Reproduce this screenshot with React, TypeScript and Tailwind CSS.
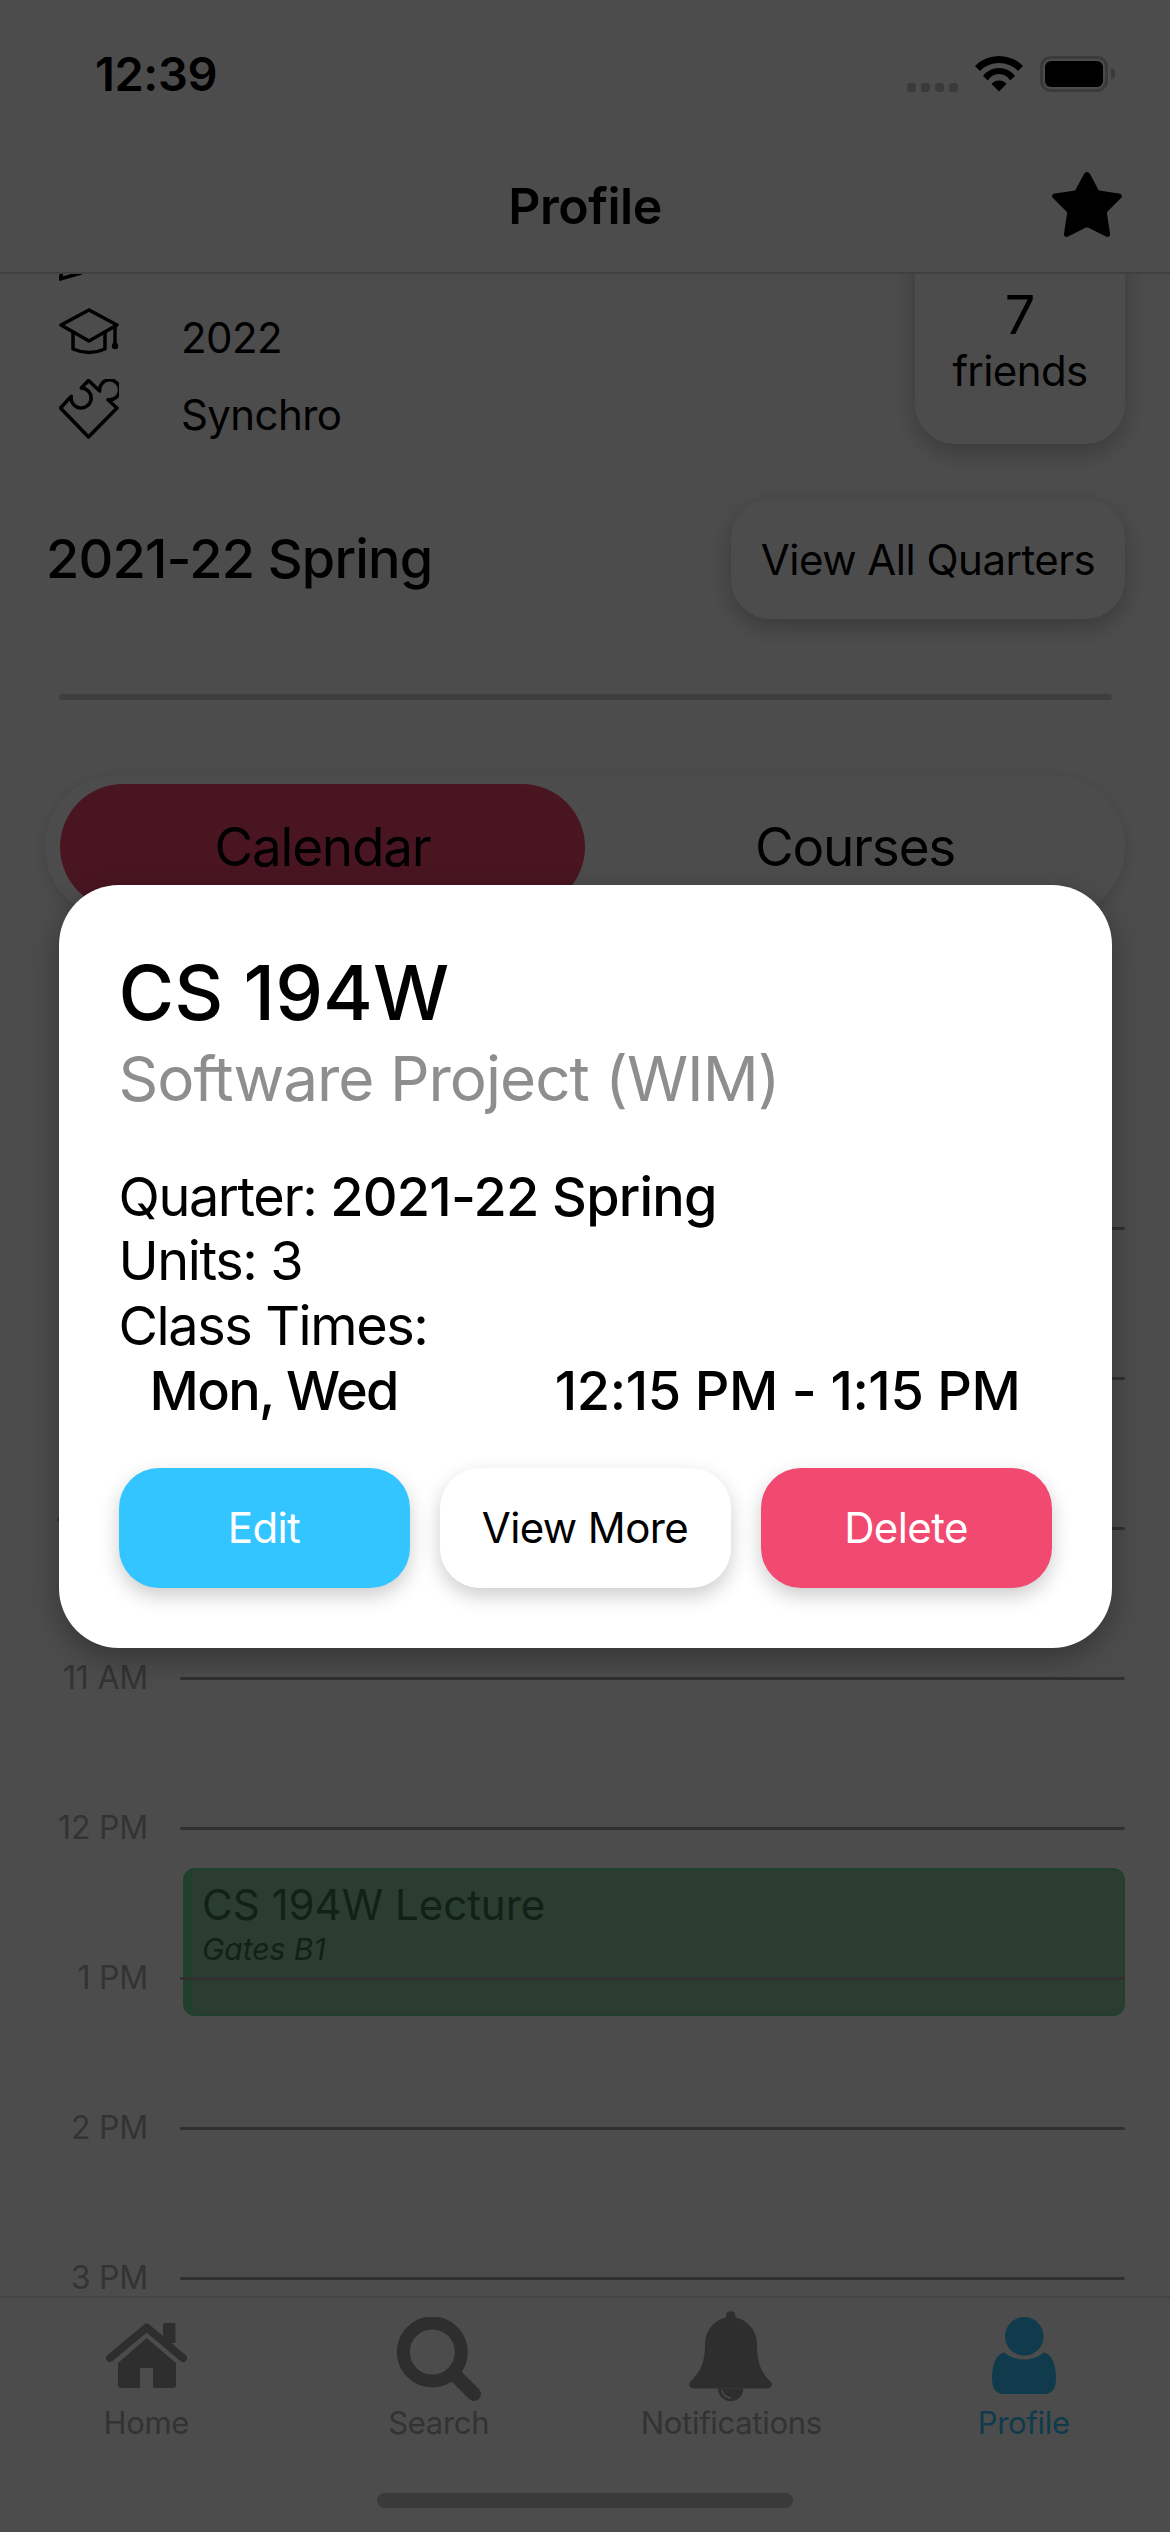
import React from "react";

const Hour = ({ label, children }: { label: string; children?: React.ReactNode }) => (
  <div className="relative flex h-[150px] items-center">
    <div className="w-[148px] text-right text-[32px] leading-none tracking-[-0.2px] text-[#aaaaaa]">{label}</div>
    <div className="ml-[32px] h-[3px] flex-1 rounded-full bg-[#a0a0a0]" />
    {children}
  </div>
);

const Tab = ({ icon, label, active }: { icon: React.ReactNode; label: string; active?: boolean }) => (
  <div className={`flex flex-col items-center ${active ? "text-[#33c5ff]" : "text-[#999999]"}`}>
    <div className="flex h-[90px] w-[120px] items-start justify-center">{icon}</div>
    <div className={`mt-[4px] text-[31px] leading-[36px] tracking-[-0.3px] ${active ? "" : "text-[#aaaaaa]"}`}>{label}</div>
  </div>
);

const ActionButton = ({ label, cls }: { label: string; cls: string }) => (
  <button className={`h-[120px] w-[291px] rounded-[40px] text-[42px] tracking-[-0.6px] shadow-[0_8px_20px_rgba(0,0,0,0.2)] ${cls}`}>
    {label}
  </button>
);

export default function App() {
  return (
    <div className="relative flex h-[2532px] w-[1170px] flex-col overflow-hidden bg-white font-['Inter','Liberation_Sans',sans-serif] text-black">
      <header className="z-10 h-[274px] shrink-0 border-b-2 border-[#d8d8d8] bg-white">
        <div className="flex h-[147px] items-center justify-between pl-[95px] pr-[55px]">
          <span className="text-[47px] font-semibold leading-none tracking-[-0.4px]">12:39</span>
          <div className="flex items-start">
            <div className="mr-[17px] mt-[27px] flex gap-[5px]">
              <i className="h-[9px] w-[9px] rounded-[3px] bg-[#c4c4c4]" />
              <i className="h-[9px] w-[9px] rounded-[3px] bg-[#c4c4c4]" />
              <i className="h-[9px] w-[9px] rounded-[3px] bg-[#c4c4c4]" />
              <i className="h-[9px] w-[9px] rounded-[3px] bg-[#c4c4c4]" />
            </div>
            <svg width="48" height="36" viewBox="0 0 48 36" className="mr-[17px]">
              <path d="M0 10 L5 15 A26.5 26.5 0 0 1 43 15 L48 10 A33.8 33.8 0 0 0 0 10Z" />
              <path d="M8 20 L13 24.5 A12.5 12.5 0 0 1 35 24.5 L40 20 A20 20 0 0 0 8 20Z" />
              <path d="M24 35.5 L16.5 28 A9.8 9.8 0 0 1 31.5 28 Z" />
            </svg>
            <div className="flex items-center">
              <div className="h-[36px] w-[68px] rounded-[11px] border-[3px] border-[#c4c4c4] p-[2px]">
                <div className="h-full w-full rounded-[6px] bg-black" />
              </div>
              <div className="ml-[3px] h-[11px] w-[4px] rounded-r-full bg-[#c4c4c4]" />
            </div>
          </div>
        </div>
        <div className="relative flex h-[126px] items-center justify-center">
          <span className="-mt-[8px] text-[50px] font-semibold leading-none tracking-[-0.5px]">Profile</span>
          <svg width="72" height="68" viewBox="0 0 72 68" className="absolute right-[47px] top-[23px]">
            <path d="M36 2 C37.5 2 38.5 3 39 4 L47 19 C47.5 20 48 20.5 49.5 20.7 L68 23.5 C71 24 71.7 26.5 70 28 L57 41 C56 42 55.8 43 56 44 L59 63.5 C59.5 66.5 57 67.5 55 66.5 L38 58 C36.8 57.4 35.2 57.4 34 58 L17 66.5 C15 67.5 12.5 66.5 13 63.5 L16 44 C16.2 43 16 42 15 41 L2 28 C0.3 26.5 1 24 4 23.5 L22.5 20.7 C24 20.5 24.5 20 25 19 L33 4 C33.5 3 34.5 2 36 2Z" />
          </svg>
        </div>
      </header>

      <main className="min-h-0 flex-1 overflow-hidden">
        <div className="-mt-[58px]">
          <div className="flex items-start justify-between pl-[59px] pr-[45px]">
            <div className="flex flex-col text-[42px] leading-none tracking-[-0.6px]">
              <div className="flex h-[77px] items-center">
                <svg width="60" height="60" viewBox="0 0 60 60" fill="none" stroke="currentColor" strokeWidth="3.5" strokeLinejoin="round" className="-mt-[6px]">
                  <path d="M1 57 L7 36 L40 3 Q44 -1 48 3 L56 11 Q60 15 56 19 L22 51 Z" />
                </svg>
              </div>
              <div className="flex h-[77px] items-center gap-[62px]">
                <svg width="60" height="48" viewBox="0 0 60 48" fill="none" stroke="currentColor" strokeWidth="3.5" strokeLinejoin="round" strokeLinecap="round">
                  <path d="M2 17 L30 2 L58 17 L30 33 Z" />
                  <path d="M14 24 V41 Q30 48 46 41 V24" />
                  <path d="M56 17 V37" />
                  <circle cx="56" cy="38" r="3.2" fill="currentColor" stroke="none" />
                </svg>
                <span className="pt-[12px]">2022</span>
              </div>
              <div className="flex h-[77px] items-center gap-[62px]">
                <svg width="60" height="60" viewBox="0 0 60 60" fill="none" stroke="currentColor" strokeWidth="3.5" strokeLinejoin="round" strokeLinecap="round">
                  <path d="M1.5 29 L12.3 17.3 A10 10 0 1 0 22.3 9 L29.5 1.5 L40.7 12 A10 10 0 1 1 49 20.7 L58 29 L29.5 58 Z" />
                </svg>
                <span className="pt-[12px]">Synchro</span>
              </div>
            </div>
            <div className="flex h-[228px] w-[210px] flex-col items-center justify-end rounded-[40px] bg-white pb-[47px] shadow-[0_8px_24px_rgba(0,0,0,0.25)]">
              <div className="text-[54px] leading-[60px]">7</div>
              <div className="text-[42px] leading-[52px] tracking-[-0.6px]">friends</div>
            </div>
          </div>

          <div className="mt-[52px] flex items-center justify-between pl-[46px] pr-[45px]">
            <h2 className="text-[54px] font-medium leading-none tracking-[-0.8px]">2021-22 Spring</h2>
            <button className="h-[120px] w-[394px] rounded-[40px] bg-white text-[42px] tracking-[-0.5px] shadow-[0_8px_24px_rgba(0,0,0,0.25)]">
              View All Quarters
            </button>
          </div>

          <div className="ml-[59px] mr-[58px] mt-[75px] h-[6px] rounded-full bg-[#d0d0d0]" />

          <div className="ml-[45px] mr-[45px] mt-[75px] flex h-[144px] items-center rounded-[72px] bg-white py-[9px] pl-[15px] shadow-[0_4px_16px_rgba(0,0,0,0.15)]">
            <div className="flex h-[126px] w-[525px] items-center justify-center rounded-[63px] bg-[#f24970] text-[53px] leading-none tracking-[-1.2px]">
              Calendar
            </div>
            <div className="flex h-[126px] flex-1 items-center justify-center text-[53px] leading-none tracking-[-1.2px]">
              Courses
            </div>
          </div>

          <div className="mt-[234px] pr-[45px]">
            <Hour label="8 AM" />
            <Hour label="9 AM" />
            <Hour label="10 AM" />
            <Hour label="11 AM" />
            <Hour label="12 PM">
              <div className="absolute left-[183px] right-0 top-[115px] h-[148px] rounded-[12px] border-y-2 border-l-[9px] border-r-2 border-[#6fd68f] bg-[#64b47b]/70 pl-[10px] pt-[11px] text-[#397150]">
                <div className="text-[42px] leading-[48px]">CS 194W Lecture</div>
                <div className="mt-[3px] text-[30px] italic leading-[34px]">Gates B1</div>
              </div>
            </Hour>
            <Hour label="1 PM" />
            <Hour label="2 PM" />
            <Hour label="3 PM" />
          </div>
        </div>
      </main>

      <footer className="z-10 h-[236px] shrink-0 border-t-2 border-[#e4e4e4] bg-white">
        <div className="grid h-[140px] grid-cols-4 pt-[13px]">
          <Tab
            label="Home"
            icon={
              <svg width="81" height="65" viewBox="0 0 81 65" fill="currentColor" className="mt-[12px]">
                <path d="M4 35 L40.7 4.5 L77 35" fill="none" stroke="currentColor" strokeWidth="8" strokeLinecap="round" strokeLinejoin="round" />
                <rect x="57" y="0" width="12.5" height="20" rx="1" />
                <path d="M12 40 L40.7 15 L70 40 V62 Q70 65 67 65 H47 V45 H34 V65 H15 Q12 65 12 62Z" />
              </svg>
            }
          />
          <Tab
            label="Search"
            icon={
              <svg width="84" height="84" viewBox="0 0 84 84" fill="none" stroke="currentColor" className="mt-[6px]">
                <circle cx="35.3" cy="35" r="29" strokeWidth="13" />
                <path d="M57 57 L77 77" strokeWidth="14" strokeLinecap="round" />
              </svg>
            }
          />
          <Tab
            label="Notifications"
            icon={
              <svg width="84" height="90" viewBox="0 0 84 90" fill="currentColor">
                <circle cx="41.7" cy="5" r="4.8" />
                <path d="M41.7 6 C56 6 68 18 68 33 C68 55 74 63 81 70 C85 74 82 77.5 78 77.5 H5 C1 77.5 -2 74 2 70 C9 63 16 55 16 33 C16 18 28 6 41.7 6Z" />
                <path d="M29 77.5 H54.4 A12.7 12.7 0 0 1 29 77.5Z" />
                <path d="M33 79 A9 9 0 0 0 42 87" fill="none" stroke="#ffffff" strokeWidth="1.5" />
              </svg>
            }
          />
          <Tab
            active
            label="Profile"
            icon={
              <svg width="64" height="77" viewBox="0 0 64 77" fill="currentColor" className="mt-[6px]">
                <circle cx="32.3" cy="19.3" r="19.3" />
                <path d="M12 35.5 C18 40 24 42.5 32 42.5 C40 42.5 46 40 52 35.5 C59 37 64 46 64 61 C64 72 60 77 52 77 H12 C4 77 0 72 0 61 C0 46 5 37 12 35.5Z" />
              </svg>
            }
          />
        </div>
        <div className="mx-auto mt-[55px] h-[15px] w-[416px] rounded-full bg-[#c1c1c1]" />
      </footer>

      <div className="absolute inset-0 z-20 flex items-center justify-center bg-black/70">
        <div className="w-[1053px] rounded-[60px] bg-white p-[60px] shadow-[0_10px_30px_rgba(0,0,0,0.3)]">
          <div className="text-[76px] font-medium leading-[94px]">CS 194W</div>
          <div className="text-[62px] leading-[79px] tracking-[-1px] text-[#8e8e8e]">Software Project (WIM)</div>
          <div className="mt-[47px] text-[54px] leading-[64.75px] tracking-[-1.4px]">
            <div>
              Quarter: <span className="font-medium tracking-[-0.8px]">2021-22 Spring</span>
            </div>
            <div>Units: 3</div>
            <div>Class Times:</div>
            <div className="flex justify-between pl-[31px] pr-[31px] font-medium">
              <span className="tracking-[-1.6px]">Mon, Wed</span>
              <span className="tracking-[-0.4px]">12:15 PM - 1:15 PM</span>
            </div>
          </div>
          <div className="mt-[44px] flex justify-between">
            <ActionButton label="Edit" cls="bg-[#33c5ff] text-white" />
            <ActionButton label="View More" cls="bg-white text-black" />
            <ActionButton label="Delete" cls="bg-[#f24970] text-white" />
          </div>
        </div>
      </div>
    </div>
  );
}
